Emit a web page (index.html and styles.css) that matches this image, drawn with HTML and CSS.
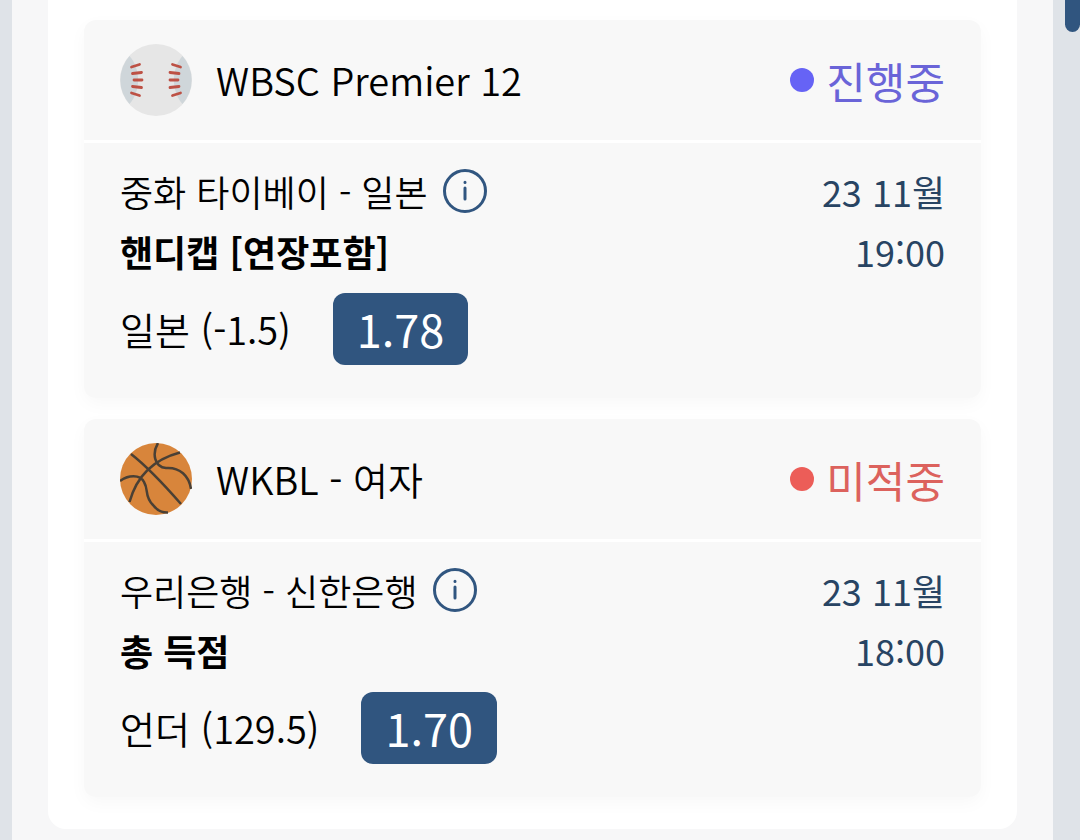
FILE: index.html
```
<!DOCTYPE html>
<html lang="ko">

<head>
    <meta charset="utf-8">
    <title>베팅 내역</title>
    <link rel="stylesheet" href="styles.css">
</head>

<body>
    <main class="content">
        <div class="panel">
            <article class="bet">
                <header class="bet-head">
                    <svg class="ball" viewBox="0 0 72 72">
                        <circle cx="36" cy="36" r="36" fill="#e6e6e6" />
                        <path d="M9.500 12C21 25 21 47 9.500 60A36 36 0 0 1 9.500 12zM62.500 12C51 25 51 47 62.500 60A36 36 0 0 0 62.500 12z" fill="#cfd6da" />
                        <path d="M11.500 23l8-2.500M12.500 29.500l9-1M14 36h8M12.500 42.500l9 1M11.500 49l8 2.500M60.500 23l-8-2.500M59 29.500l-9-1M58 36h-8M59 42.500l-9 1M60.500 49l-8 2.500" fill="none" stroke="#bd5145" stroke-width="2.800" stroke-linecap="round" />
                    </svg>
                    <h2 class="league">WBSC Premier 12</h2>
                    <span class="status running">진행중</span>
                </header>
                <div class="bet-body">
                    <div class="row">
                        <span class="teams">중화 타이베이 - 일본</span>
                        <button class="info" type="button" aria-label="정보">
                            <svg viewBox="0 0 44 44">
                                <circle cx="22" cy="22" r="20.500" />
                                <path d="M22 19v11M22 13.300v.1" />
                            </svg>
                        </button>
                        <span class="date">23 11월</span>
                    </div>
                    <div class="row">
                        <strong class="market">핸디캡 [연장포함]</strong>
                        <time class="date">19:00</time>
                    </div>
                    <div class="pick">
                        <span>일본 (-1.5)</span>
                        <span class="odds">1.78</span>
                    </div>
                </div>
            </article>

            <article class="bet">
                <header class="bet-head">
                    <svg class="ball" viewBox="0 0 72 72">
                        <circle cx="36" cy="36" r="36" fill="#d8853b" />
                        <path d="M11 11C29 25 47 45 61 61M60 9.500C35 16 17 32 9.500 59M38 0C32 10 34 24 46 25C60 24 69 33 71 46M0 38C8 32 20 31 24 39C29 47 24 53 33 62Q39 70 48 69.500" fill="none" stroke="#4a4035" stroke-width="2.500" />
                    </svg>
                    <h2 class="league">WKBL - 여자</h2>
                    <span class="status lost">미적중</span>
                </header>
                <div class="bet-body">
                    <div class="row">
                        <span class="teams">우리은행 - 신한은행</span>
                        <button class="info" type="button" aria-label="정보">
                            <svg viewBox="0 0 44 44">
                                <circle cx="22" cy="22" r="20.500" />
                                <path d="M22 19v11M22 13.300v.1" />
                            </svg>
                        </button>
                        <span class="date">23 11월</span>
                    </div>
                    <div class="row">
                        <strong class="market">총 득점</strong>
                        <time class="date">18:00</time>
                    </div>
                    <div class="pick">
                        <span>언더 (129.5)</span>
                        <span class="odds">1.70</span>
                    </div>
                </div>
            </article>
        </div>
    </main>
    <div class="scroll">
        <div class="thumb"></div>
    </div>
</body>

</html>
```
FILE: styles.css
```
* {
    padding: 0;
    margin: 0;
    box-sizing: border-box;
}

body {
    display: flex;
    min-height: 100vh;
    padding-left: 12px;
    background: #dfe3e8;
    color: #000;
    font-family: "Noto Sans CJK KR", sans-serif;
    font-size: 36px;
    font-weight: 350;
    line-height: 60px;
}

.content {
    flex: 1;
    padding: 0 36px 11px;
    background: #f7f7f8;
}

.panel {
    display: flex;
    flex-direction: column;
    gap: 21px;
    padding: 20px 36px 32px;
    background: #fff;
    border-radius: 0 0 18px 18px;
}

.bet {
    background: #f8f8f8;
    border-radius: 12px;
    box-shadow: 0 6px 18px rgba(0, 0, 0, .03);
}

.bet-head {
    display: flex;
    align-items: center;
    padding: 24px 36px;
    border-bottom: 3px solid #fff;
}

.ball {
    width: 72px;
    height: 72px;
    margin-right: 24px;
}

.league {
    font-size: 38px;
    font-weight: 350;
}

.status {
    display: flex;
    align-items: center;
    gap: 12px;
    margin-left: auto;
    font-size: 43px;
    font-weight: 400;
}

.status:before {
    content: "";
    width: 24px;
    height: 24px;
    border-radius: 50%;
}

.running {
    color: #6a64d8;
}

.running:before {
    background: #6663f5;
}

.lost {
    color: #dc625d;
}

.lost:before {
    background: #ec5d58;
}

.bet-body {
    padding: 18px 36px 33px;
}

.row {
    display: flex;
    align-items: center;
}

.info {
    width: 44px;
    height: 44px;
    margin-left: 15px;
    border: 0;
    background: none;
    cursor: pointer;
}

.info svg {
    display: block;
    fill: none;
    stroke: #315680;
    stroke-width: 3;
    stroke-linecap: round;
}

.market {
    font-weight: 700;
}

.date {
    margin-left: auto;
    color: #284463;
    font-weight: 400;
}

.pick {
    display: flex;
    align-items: center;
    gap: 42px;
    margin-top: 12px;
    font-size: 38px;
}

.odds {
    padding: 0 24px;
    background: #30557f;
    border-radius: 12px;
    color: #fff;
    font-size: 45px;
    font-weight: 400;
    line-height: 72px;
}

.scroll {
    width: 27px;
    padding-left: 12px;
}

.thumb {
    height: 32px;
    background: #30557f;
    border-radius: 0 0 8px 8px;
}
```
